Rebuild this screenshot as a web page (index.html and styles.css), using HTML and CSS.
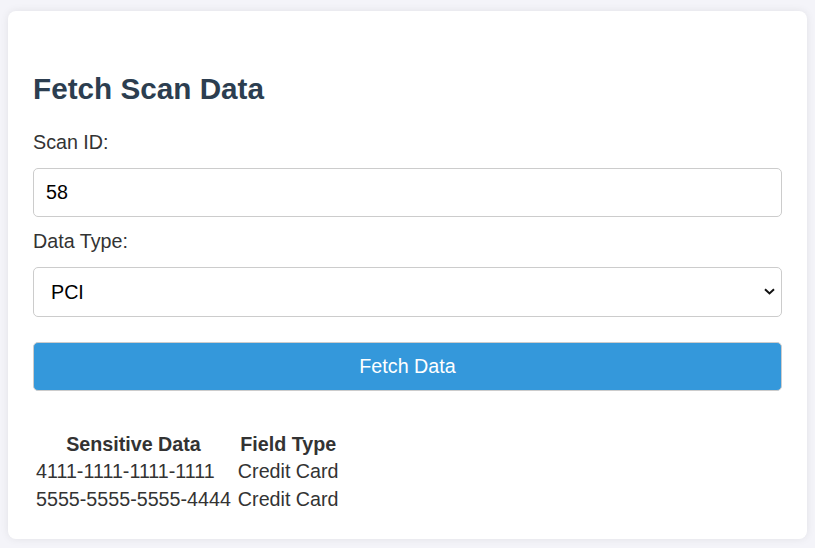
FILE: index.html
```html
<!DOCTYPE html>
<html lang="en">
<head>
<meta charset="utf-8">
<title>Fetch Scan Data</title>
<link rel="stylesheet" href="styles.css">
</head>
<body>
<div class="card">
  <h2 class="title">Fetch Scan Data</h2>
  <label class="field-label" for="scanId">Scan ID:</label>
  <input class="control" id="scanId" type="text" value="58">
  <label class="field-label second" for="dataType">Data Type:</label>
  <div class="select-wrap">
    <select class="control select" id="dataType">
      <option>PCI</option>
    </select>
    <svg class="chevron" width="11" height="7" viewBox="0 0 11 7" aria-hidden="true"><path d="M1 1.2 L5.5 5.4 L10 1.2" fill="none" stroke="#111" stroke-width="2"/></svg>
  </div>
  <button class="fetch-btn" type="button">Fetch Data</button>
  <table class="results">
    <thead>
      <tr><th>Sensitive Data</th><th>Field Type</th></tr>
    </thead>
    <tbody>
      <tr><td>4111-1111-1111-1111</td><td>Credit Card</td></tr>
      <tr><td>5555-5555-5555-4444</td><td>Credit Card</td></tr>
    </tbody>
  </table>
</div>
</body>
</html>
```
FILE: styles.css
```css
html, body {
  margin: 0;
}
body {
  background: #f4f4f9;
  padding: 11px 8px 8px 8px;
  font-family: "Liberation Sans", Arial, sans-serif;
  font-size: 19.7px;
  color: #333;
}
.card {
  background: #fff;
  border-radius: 8px;
  padding: 25px;
  box-shadow: 0 0 8px rgba(0, 0, 0, 0.08);
}
.title {
  margin: 36px 0 0 0;
  font-size: 29.7px;
  line-height: 34px;
  color: #2c3e50;
  font-weight: bold;
}
.field-label {
  display: block;
  margin: 25px 0 14px 0;
  line-height: 23px;
}
.field-label.second {
  margin-top: 13px;
}
.control {
  display: block;
  box-sizing: border-box;
  width: 100%;
  height: 49px;
  margin: 0;
  padding: 0 12px;
  border: 1px solid #ccc;
  border-radius: 5px;
  font-family: "Liberation Sans", Arial, sans-serif;
  font-size: 19.7px;
  color: #000;
  background: #fff;
  outline: none;
}
.select-wrap {
  position: relative;
}
.select {
  -webkit-appearance: none;
  appearance: none;
  height: 50px;
  padding-left: 17px;
}
.chevron {
  position: absolute;
  right: 7px;
  top: 21px;
}
.fetch-btn {
  display: block;
  box-sizing: border-box;
  width: 100%;
  height: 49px;
  margin-top: 25px;
  border: 1px solid #ccc;
  border-radius: 5px;
  background: #3498db;
  color: #fff;
  font-family: "Liberation Sans", Arial, sans-serif;
  font-size: 19.7px;
}
.results {
  margin-top: 39px;
  color: #333;
}
.results th, .results td {
  padding: 1px;
  line-height: 23.3px;
}
.results th:first-child, .results td:first-child {
  padding-right: 4px;
}
```
